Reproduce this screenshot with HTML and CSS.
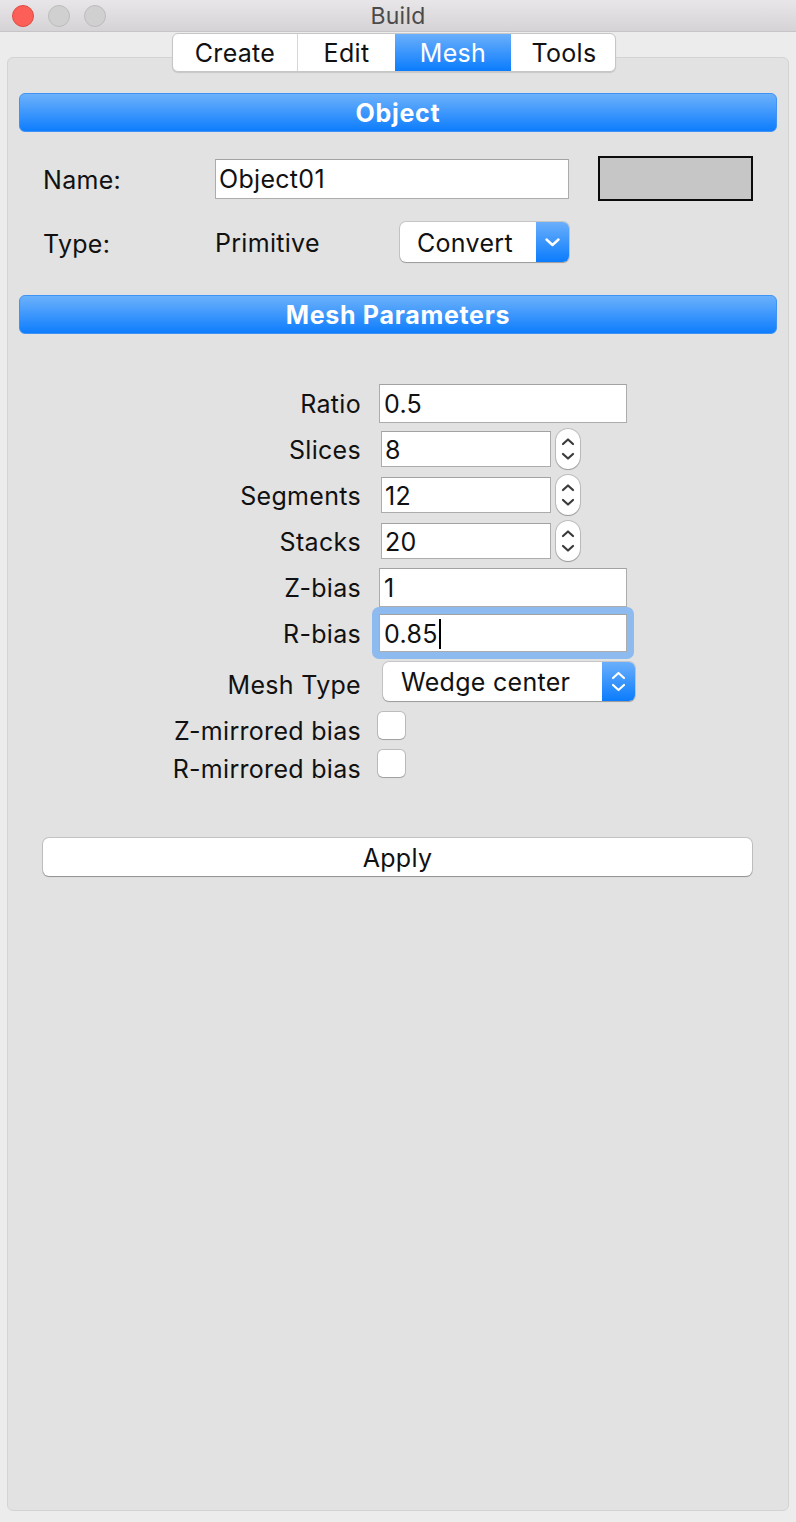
FILE: index.html
```html
<!DOCTYPE html>
<html>
<head>
<meta charset="utf-8">
<title>Build</title>
<link rel="stylesheet" href="styles.css">
</head>
<body>
<div class="window">
  <header class="titlebar">
    <div class="lights">
      <span class="light red"></span>
      <span class="light"></span>
      <span class="light"></span>
    </div>
    <div class="title">Build</div>
    <div></div>
  </header>
  <main class="content">
    <nav class="tabs">
      <span class="tab">Create</span>
      <span class="tab">Edit</span>
      <span class="tab active">Mesh</span>
      <span class="tab after-active">Tools</span>
    </nav>
    <section class="panel">
      <div class="section-head">Object</div>
      <div class="obj">
        <div class="obj-row name-row">
          <span class="lbl">Name:</span>
          <div class="field name-field">Object01</div>
          <div class="swatch"></div>
        </div>
        <div class="obj-row type-row">
          <span class="lbl">Type:</span>
          <span class="value">Primitive</span>
          <div class="popup convert">
            <span class="popup-text">Convert</span>
            <span class="popup-btn">
              <svg width="33" height="40" viewBox="0 0 33 40"><path d="M10.5 17.5 L16.5 23 L22.5 17.5" fill="none" stroke="#fff" stroke-width="2.4" stroke-linecap="round" stroke-linejoin="round"/></svg>
            </span>
          </div>
        </div>
      </div>

      <div class="section-head mesh-head">Mesh Parameters</div>

      <div class="form">
        <span class="flbl">Ratio</span>
        <div class="cell"><div class="field wide">0.5</div></div>

        <span class="flbl">Slices</span>
        <div class="cell spin-cell">
          <div class="field narrow">8</div>
          <span class="spinner"><svg width="24" height="40" viewBox="0 0 24 40"><path d="M7 15 L12 10.5 L17 15 M7 25 L12 29.5 L17 25" fill="none" stroke="#3a3a3a" stroke-width="2.2" stroke-linecap="round" stroke-linejoin="round"/></svg></span>
        </div>

        <span class="flbl">Segments</span>
        <div class="cell spin-cell">
          <div class="field narrow">12</div>
          <span class="spinner"><svg width="24" height="40" viewBox="0 0 24 40"><path d="M7 15 L12 10.5 L17 15 M7 25 L12 29.5 L17 25" fill="none" stroke="#3a3a3a" stroke-width="2.2" stroke-linecap="round" stroke-linejoin="round"/></svg></span>
        </div>

        <span class="flbl">Stacks</span>
        <div class="cell spin-cell">
          <div class="field narrow">20</div>
          <span class="spinner"><svg width="24" height="40" viewBox="0 0 24 40"><path d="M7 15 L12 10.5 L17 15 M7 25 L12 29.5 L17 25" fill="none" stroke="#3a3a3a" stroke-width="2.2" stroke-linecap="round" stroke-linejoin="round"/></svg></span>
        </div>

        <span class="flbl">Z-bias</span>
        <div class="cell"><div class="field wide">1</div></div>

        <span class="flbl">R-bias</span>
        <div class="cell">
          <div class="focus-ring"><div class="field wide focused">0.85<span class="caret"></span></div></div>
        </div>

        <span class="flbl lbl-popup">Mesh Type</span>
        <div class="cell">
          <div class="popup mesh-type">
            <span class="popup-text">Wedge center</span>
            <span class="popup-btn">
              <svg width="33" height="39" viewBox="0 0 33 39"><path d="M11 16 L16.5 11 L22 16 M11 23 L16.5 28 L22 23" fill="none" stroke="#fff" stroke-width="2.2" stroke-linecap="round" stroke-linejoin="round"/></svg>
            </span>
          </div>
        </div>

        <span class="flbl lbl-check">Z-mirrored bias</span>
        <div class="cell"><span class="checkbox"></span></div>

        <span class="flbl lbl-check">R-mirrored bias</span>
        <div class="cell"><span class="checkbox"></span></div>
      </div>

      <div class="apply">Apply</div>
    </section>
  </main>
</div>
</body>
</html>
```

FILE: styles.css
```css
* { box-sizing: border-box; }

html, body {
  margin: 0;
  padding: 0;
}

body {
  font-family: Inter, "Noto Sans", "Liberation Sans", sans-serif;
  font-size: 25px;
  letter-spacing: 0.3px;
  color: #111;
  background: #ececec;
}

.window {
  width: 796px;
  height: 1522px;
  display: flex;
  flex-direction: column;
  background: #ececec;
  overflow: hidden;
  border-radius: 0 0 6px 6px;
}

/* Title bar */
.titlebar {
  height: 32px;
  flex: none;
  border-bottom: 1px solid #c6c4c6;
  background: linear-gradient(#e8e6e8, #d5d3d5);
  display: grid;
  grid-template-columns: 1fr auto 1fr;
  align-items: center;
}

.lights {
  display: flex;
  gap: 14px;
  padding-left: 12px;
  padding-top: 1px;
}

.light {
  width: 22px;
  height: 22px;
  border-radius: 50%;
  background: #d1d0d1;
  border: 1px solid #bdbcbd;
}

.light.red {
  background: #fc5f57;
  border-color: #de4a42;
}

.title {
  font-size: 23px;
  letter-spacing: 0.2px;
  color: #4b4b4b;
  line-height: 1;
  padding-top: 1px;
}

/* Content */
.content {
  flex: 1;
  display: flex;
  flex-direction: column;
}

.tabs {
  margin: 1px 0 0 172px;
  width: 444px;
  height: 39px;
  flex: none;
  display: grid;
  grid-template-columns: 124px 98px 116px 106px;
  background: #fff;
  border: 1px solid #c6c6c6;
  border-radius: 6px;
  box-shadow: 0 1px 1px rgba(0, 0, 0, 0.12);
  overflow: hidden;
  position: relative;
  z-index: 1;
}

.tab {
  display: flex;
  align-items: center;
  justify-content: center;
  border-left: 1px solid #d6d6d6;
  color: #111;
  padding-top: 1px;
}

.tab:first-child { border-left: 0; }

.tab.active {
  background: linear-gradient(#6aaffb, #0b7cfd);
  color: #fff;
  border-left: 0;
}

.tab.after-active { border-left: 0; }

/* Panel */
.panel {
  flex: 1;
  margin: -15px 7px 11px;
  border: 1px solid #d3d3d3;
  border-radius: 6px;
  background: #e2e2e2;
  padding: 35px 11px 0;
}

.section-head {
  height: 39px;
  border-radius: 6px;
  background: linear-gradient(#6cb1fb, #0e7dfd);
  border: 1px solid #3f93f4;
  color: #fff;
  font-weight: 700;
  font-size: 25px;
  letter-spacing: 0.7px;
  display: flex;
  align-items: center;
  justify-content: center;
  padding-top: 1px;
}

.mesh-head { margin-top: 33px; }

/* Object section */
.obj {
  padding: 24px 0 0 24px;
}

.obj-row {
  display: flex;
  align-items: center;
}

.name-row { height: 45px; }

.type-row {
  height: 40px;
  margin-top: 21px;
}

.lbl {
  width: 172px;
  flex: none;
  padding-top: 3px;
}

.value {
  width: 185px;
  flex: none;
  padding-top: 2px;
}

.field {
  height: 40px;
  background: #fff;
  border: 1px solid #acacac;
  border-top-color: #a2a2a2;
  display: flex;
  align-items: center;
  padding-left: 3px;
  padding-top: 1px;
}

.name-field { width: 354px; }

.swatch {
  margin-left: 29px;
  width: 155px;
  height: 45px;
  background: #c6c6c6;
  border: 2px solid #0b0b0b;
}

/* Popups */
.popup {
  display: flex;
  background: #fff;
  border-radius: 6px;
  box-shadow: 0 0 0 1px rgba(0, 0, 0, 0.12), 0 1px 1px rgba(0, 0, 0, 0.22);
  overflow: hidden;
}

.popup-text {
  flex: 1;
  display: flex;
  align-items: center;
  padding-top: 1px;
}

.popup-btn {
  width: 33px;
  flex: none;
  display: flex;
  align-items: center;
  justify-content: center;
  background: linear-gradient(#6aaffb, #0b7cfd);
}

.popup-btn svg { display: block; }

.convert {
  width: 169px;
  height: 40px;
}

.convert .popup-text { padding-left: 17px; }

.mesh-type {
  width: 252px;
  height: 39px;
  margin-left: 4px;
}

.mesh-type .popup-text { padding-left: 18px; }

/* Form */
.form {
  margin-top: 46px;
  display: grid;
  grid-template-columns: 341px 1fr;
  grid-template-rows: 46px 46px 46px 46px 46px 46px 50px 38px 38px;
  column-gap: 19px;
  align-items: center;
}

.flbl {
  text-align: right;
  padding-top: 2px;
  margin-right: -1px;
}

.flbl.lbl-popup { padding-top: 8px; }

.flbl.lbl-check { padding-top: 12px; }

.cell {
  display: flex;
  align-items: center;
}

.field.wide {
  width: 248px;
  height: 39px;
  padding-left: 4px;
}

.spin-cell { margin-left: 2px; }

.field.narrow {
  width: 170px;
  height: 36px;
}

.spinner {
  margin-left: 5px;
  width: 24px;
  height: 40px;
  background: #fff;
  border-radius: 12px;
  box-shadow: 0 0 0 1px rgba(0, 0, 0, 0.16), 0 1px 1px rgba(0, 0, 0, 0.2);
}

.spinner svg { display: block; }

.focus-ring {
  margin: -7px;
  padding: 7px;
  border-radius: 7px;
  background: #8dbaef;
}

.field.focused {
  height: 38px;
}

.caret {
  display: inline-block;
  width: 2px;
  height: 30px;
  background: #000;
  margin-left: 1px;
}

.checkbox {
  width: 27px;
  height: 27px;
  margin-left: -1px;
  background: #fff;
  border-radius: 5px;
  box-shadow: 0 0 0 1px rgba(0, 0, 0, 0.17), 0 1px 1px rgba(0, 0, 0, 0.15);
}

/* Apply */
.apply {
  margin: 56px 25px 0 24px;
  height: 38px;
  background: #fff;
  border-radius: 6px;
  box-shadow: 0 0 0 1px rgba(0, 0, 0, 0.14), 0 1px 1px rgba(0, 0, 0, 0.25);
  display: flex;
  align-items: center;
  justify-content: center;
  padding-top: 1px;
}
```
